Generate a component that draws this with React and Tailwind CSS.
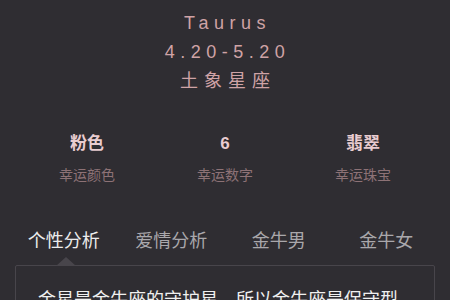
import React from "react";

const lucky = [
  { value: "粉色", label: "幸运颜色" },
  { value: "6", label: "幸运数字" },
  { value: "翡翠", label: "幸运珠宝" },
];

const tabs = ["个性分析", "爱情分析", "金牛男", "金牛女"];

export default function App() {
  return (
    <div
      className="w-[450px] h-[300px] overflow-hidden bg-[#2f2d32]"
      style={{ fontFamily: '"Liberation Sans", "Noto Sans CJK SC", sans-serif' }}
    >
      <div className="flex flex-col items-center pt-[9px] text-[18px] leading-[29px] tracking-[5.5px] text-[#cfa3a6]">
        <div className="pl-[5px]">Taurus</div>
        <div className="pl-[5px]">4.20-5.20</div>
        <div className="pl-[6px] tracking-[6px]">土象星座</div>
      </div>

      <div className="grid grid-cols-3 px-[18px] pt-[38px]">
        {lucky.map((item) => (
          <div key={item.label} className="flex flex-col items-center">
            <div className="text-[17px] leading-[20px] font-bold text-[#e9ccd0]">{item.value}</div>
            <div className="mt-[11px] text-[14px] leading-[20px] text-[#8d7276]">{item.label}</div>
          </div>
        ))}
      </div>

      <div className="grid grid-cols-4 px-[10px] pt-[46px]">
        {tabs.map((tab, i) => (
          <div
            key={tab}
            className={`text-center text-[18px] leading-[20px] ${i === 0 ? "text-[#ececec]" : "text-[#a9a7ab]"}`}
          >
            {tab}
          </div>
        ))}
      </div>

      <div className="relative mx-[15px] mt-[14px] border border-[#48454b] rounded-[2px] pl-[22px] pt-[23px] pb-4">
        <div className="absolute -top-[9px] left-[40px] w-0 h-0 border-l-[10px] border-r-[10px] border-b-[9px] border-l-transparent border-r-transparent border-b-[#48454b]" />
        <div className="text-[18px] leading-[22px] text-[#f0f0f0] whitespace-nowrap">
          金星是金牛座的守护星，所以金牛座是保守型
        </div>
      </div>
    </div>
  );
}
